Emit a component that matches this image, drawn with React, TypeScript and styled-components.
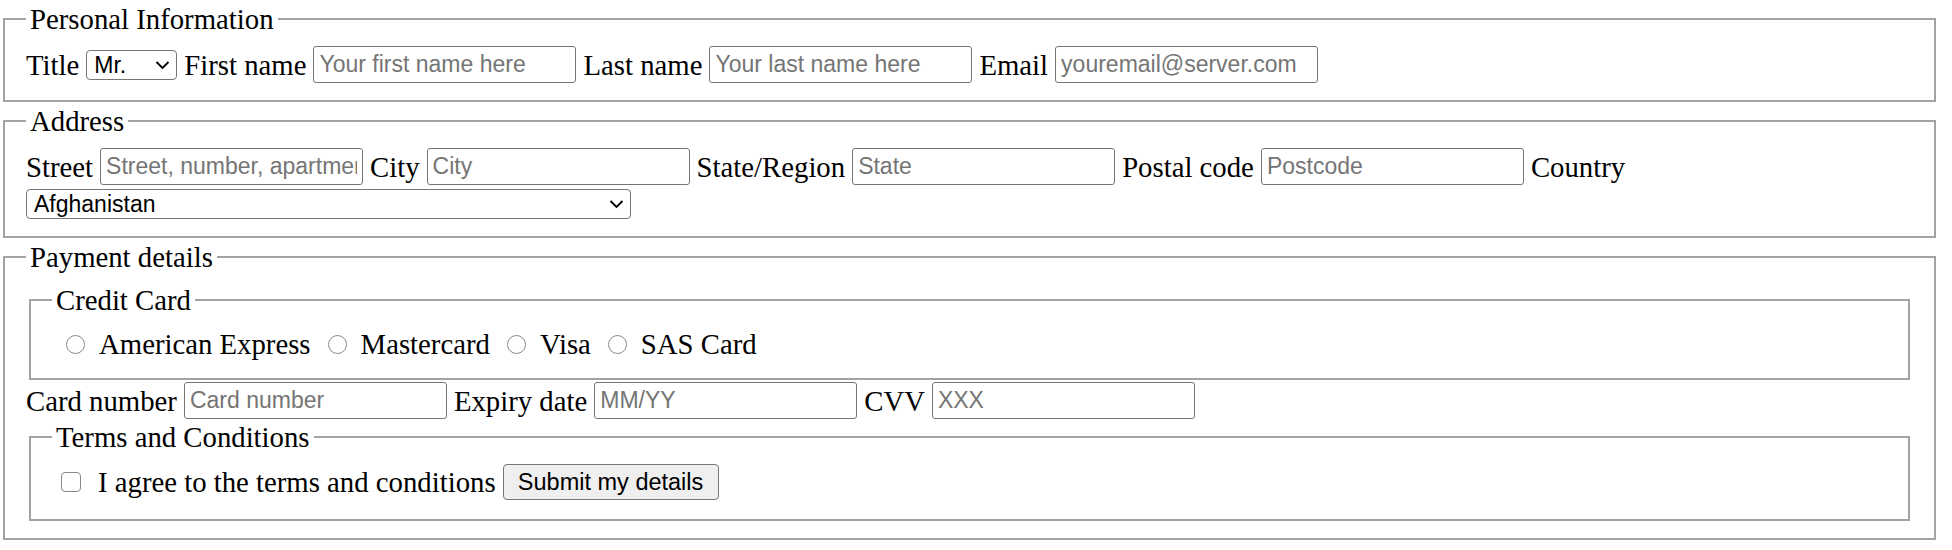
import React from "react";
import styled, { createGlobalStyle } from "styled-components";

const GlobalStyle = createGlobalStyle`
  html, body {
    margin: 0;
    background: #ffffff;
  }
  body {
    font-family: "Liberation Serif", "Times New Roman", serif;
    font-size: 28.75px;
    color: #000000;
  }
`;

const Form = styled.form`
  display: flex;
  flex-direction: column;
  gap: 3px;
  padding: 3px 13px 0 0;
`;

const Fieldset = styled.fieldset<{ $bottom?: number }>`
  margin: 0 3px;
  padding: 11px 21px ${(p) => p.$bottom ?? 17}px;
  border: 2px solid #a3a3a3;
  min-width: 0;
`;

const Legend = styled.legend`
  padding: 0 4px;
  font-size: 28.75px;
  line-height: 32px;
`;

const Stack = styled.div`
  display: flex;
  flex-direction: column;
  gap: 2px;
`;

const Row = styled.div<{ $height?: number }>`
  display: flex;
  flex-wrap: wrap;
  align-items: center;
  column-gap: 7px;
  row-gap: 4px;
  min-height: ${(p) => p.$height ?? 0}px;
`;

const Label = styled.label`
  white-space: nowrap;
  line-height: 32px;
`;

const TextInput = styled.input`
  box-sizing: border-box;
  flex-shrink: 0;
  width: 263px;
  height: 37px;
  margin: 0;
  padding: 0 5px;
  border: 1px solid #767676;
  border-radius: 3px;
  background: #ffffff;
  font-family: "Liberation Sans", Arial, sans-serif;
  font-size: 23px;
  color: #000000;

  &::placeholder {
    color: #757575;
    opacity: 1;
  }
`;

const SelectWrap = styled.span<{ $width: number }>`
  position: relative;
  display: inline-flex;
  flex-shrink: 0;
  width: ${(p) => p.$width}px;
  height: 30px;
`;

const Select = styled.select`
  appearance: none;
  box-sizing: border-box;
  width: 100%;
  height: 100%;
  margin: 0;
  padding: 0 30px 0 7px;
  border: 1px solid #767676;
  border-radius: 4px;
  background: #ffffff;
  font-family: "Liberation Sans", Arial, sans-serif;
  font-size: 23px;
  color: #000000;
`;

const Chevron = styled.svg`
  position: absolute;
  right: 7px;
  top: 10px;
  width: 15px;
  height: 10px;
  pointer-events: none;
`;

const Radio = styled.input`
  appearance: none;
  box-sizing: border-box;
  flex-shrink: 0;
  width: 19px;
  height: 19px;
  margin: 0 14px 0 14px;
  border: 1.5px solid #8a8a8a;
  border-radius: 50%;
  background: #ffffff;
`;

const Checkbox = styled.input`
  appearance: none;
  box-sizing: border-box;
  flex-shrink: 0;
  width: 20px;
  height: 20px;
  margin: 0 17px 0 9px;
  border: 1.5px solid #8a8a8a;
  border-radius: 4px;
  background: #ffffff;
`;

const Option = styled.label`
  display: inline-flex;
  align-items: center;
  white-space: nowrap;
  line-height: 32px;
`;

const Options = styled.div`
  display: flex;
  align-items: center;
  gap: 3px;
  min-height: 34px;
`;

const Button = styled.button`
  box-sizing: border-box;
  flex-shrink: 0;
  height: 36px;
  width: 216px;
  margin: 0;
  padding: 0;
  border: 1px solid #767676;
  border-radius: 4px;
  background: #efefef;
  font-family: "Liberation Sans", Arial, sans-serif;
  font-size: 23.5px;
  color: #000000;
`;

const countries = ["Afghanistan", "Albania", "Algeria", "Andorra", "Angola", "Argentina"];

const Dropdown: React.FC<{ width: number; options: string[]; name: string }> = ({
  width,
  options,
  name,
}) => (
  <SelectWrap $width={width}>
    <Select name={name}>
      {options.map((o) => (
        <option key={o}>{o}</option>
      ))}
    </Select>
    <Chevron viewBox="0 0 15 10">
      <path d="M1.5 2 L7.5 8 L13.5 2" fill="none" stroke="#000" strokeWidth="1.8" />
    </Chevron>
  </SelectWrap>
);

const Field: React.FC<{ label: string; placeholder: string; id: string }> = ({
  label,
  placeholder,
  id,
}) => (
  <>
    <Label htmlFor={id}>{label}</Label>
    <TextInput id={id} type="text" placeholder={placeholder} />
  </>
);

export default function App() {
  return (
    <>
      <GlobalStyle />
      <Form onSubmit={(e) => e.preventDefault()}>
        <Fieldset>
          <Legend>Personal Information</Legend>
          <Row $height={37}>
            <Label>Title</Label>
            <Dropdown width={91} name="title" options={["Mr.", "Mrs.", "Ms.", "Dr."]} />
            <Field id="first" label="First name" placeholder="Your first name here" />
            <Field id="last" label="Last name" placeholder="Your last name here" />
            <Field id="email" label="Email" placeholder="youremail@server.com" />
          </Row>
        </Fieldset>

        <Fieldset>
          <Legend>Address</Legend>
          <Row>
            <Field id="street" label="Street" placeholder="Street, number, apartment" />
            <Field id="city" label="City" placeholder="City" />
            <Field id="state" label="State/Region" placeholder="State" />
            <Field id="postcode" label="Postal code" placeholder="Postcode" />
            <Label>Country</Label>
            <Dropdown width={605} name="country" options={countries} />
          </Row>
        </Fieldset>

        <Fieldset>
          <Legend>Payment details</Legend>
          <Stack>
            <Fieldset>
              <Legend>Credit Card</Legend>
              <Options>
                {["American Express", "Mastercard", "Visa", "SAS Card"].map((c) => (
                  <Option key={c}>
                    <Radio type="radio" name="card" value={c} />
                    {c}
                  </Option>
                ))}
              </Options>
            </Fieldset>
            <Row $height={37}>
              <Field id="cardnumber" label="Card number" placeholder="Card number" />
              <Field id="expiry" label="Expiry date" placeholder="MM/YY" />
              <Field id="cvv" label="CVV" placeholder="XXX" />
            </Row>
            <Fieldset $bottom={19}>
              <Legend>Terms and Conditions</Legend>
              <Row $height={36}>
                <Option>
                  <Checkbox type="checkbox" name="terms" />
                  I agree to the terms and conditions
                </Option>
                <Button type="submit">Submit my details</Button>
              </Row>
            </Fieldset>
          </Stack>
        </Fieldset>
      </Form>
    </>
  );
}
